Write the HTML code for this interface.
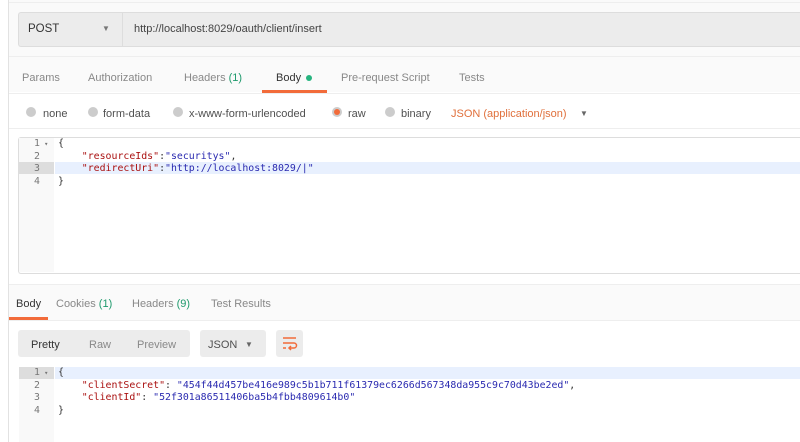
<!DOCTYPE html><html><head><style>
body{margin:0;width:800px;height:442px;overflow:hidden;background:#fff;font-family:"Liberation Sans",sans-serif;font-size:11px;color:#505050;position:relative}
.a{position:absolute}
.mono{font-family:"DejaVu Sans Mono","Liberation Mono",monospace;font-size:9.9px}
.g{color:#888}.gr{color:#1f9a6d}
</style></head><body>
<div class="a" style="left:0;top:0;width:8px;height:442px;border-right:1px solid #e2e2e2"></div>
<div class="a" style="left:9px;top:0;width:791px;height:92px;background:#fafafa"></div>
<div class="a" style="left:9px;top:2px;width:791px;border-top:1px solid #eee"></div>
<div class="a" style="left:18px;top:12px;width:782px;height:33px;background:#ececec;border:1px solid #ddd;border-right:none;border-radius:3px 0 0 3px"></div>
<div class="a" style="left:122px;top:12px;width:1px;height:35px;background:#ddd"></div>
<div class="a" style="left:28px;top:23px;font-size:11.5px;color:#333">POST</div>
<div class="a" style="left:102px;top:24px;font-size:8px;color:#777">▼</div>
<div class="a" style="left:134px;top:23px;font-size:11px;color:#444">http://localhost:8029/oauth/client/insert</div>
<div class="a" style="left:9px;top:56px;width:791px;border-top:1px solid #eee"></div>
<div class="a g" style="left:22px;top:72px">Params</div>
<div class="a g" style="left:88px;top:72px">Authorization</div>
<div class="a g" style="left:184px;top:72px">Headers <span class="gr">(1)</span></div>
<div class="a" style="left:276px;top:72px;color:#333">Body <span style="display:inline-block;width:6px;height:6px;border-radius:50%;background:#26b47f;margin-left:2px"></span></div>
<div class="a g" style="left:341px;top:72px">Pre-request Script</div>
<div class="a g" style="left:459px;top:72px">Tests</div>
<div class="a" style="left:262px;top:90px;width:65px;height:3px;background:#f26b3a"></div>
<div class="a" style="left:9px;top:93px;width:791px;border-top:1px solid #eee"></div>
<div class="a" style="top:107px;left:26px;width:10px;height:10px;border-radius:50%;background:#ccc"></div>
<div class="a" style="left:43px;top:108px">none</div>
<div class="a" style="top:107px;left:88px;width:10px;height:10px;border-radius:50%;background:#ccc"></div>
<div class="a" style="left:103px;top:108px">form-data</div>
<div class="a" style="top:107px;left:173px;width:10px;height:10px;border-radius:50%;background:#ccc"></div>
<div class="a" style="left:189px;top:108px">x-www-form-urlencoded</div>
<div class="a" style="top:107px;left:332px;width:10px;height:10px;border-radius:50%;background:#ccc"><div style="margin:2px;width:6px;height:6px;border-radius:50%;background:#f26b3a"></div></div>
<div class="a" style="left:348px;top:108px">raw</div>
<div class="a" style="top:107px;left:385px;width:10px;height:10px;border-radius:50%;background:#ccc"></div>
<div class="a" style="left:401px;top:108px">binary</div>
<div class="a" style="left:451px;top:108px;color:#e0703c">JSON (application/json)</div>
<div class="a" style="left:580px;top:109px;font-size:8px;color:#666">▼</div>
<div class="a" style="left:9px;top:128px;width:791px;border-top:1px solid #eee"></div>
<div class="a" style="left:18px;top:137px;width:782px;height:135px;border:1px solid #ddd;border-right:none;border-radius:3px 0 0 3px"></div>
<div class="a" style="left:19px;top:138px;width:35px;height:134px;background:#f9f9f9"></div>
<div class="a" style="left:19px;top:162px;width:35px;height:12px;background:#ddd"></div>
<div class="a" style="left:55px;top:162px;width:745px;height:12px;background:#e8f0fe"></div>
<div class="a mono" style="left:34px;top:138px;line-height:12.6px;color:#777">1<span style="font-size:7px"> ▾</span><br>2<br>3<br>4</div>
<div class="a mono" style="left:58px;top:138px;line-height:12.6px;color:#333;white-space:pre">{
    <span style="color:#a11">"resourceIds"</span>:<span style="color:#2a2ab0">"securitys"</span>,
    <span style="color:#a11">"redirectUri"</span>:<span style="color:#2a2ab0">"http://localhost:8029/|"</span>
}</div>
<div class="a" style="left:9px;top:284px;width:791px;height:35px;background:#fafafa;border-top:1px solid #eee;border-bottom:1px solid #eee"></div>
<div class="a" style="left:16px;top:298px;color:#333">Body</div>
<div class="a g" style="left:56px;top:298px">Cookies <span class="gr">(1)</span></div>
<div class="a g" style="left:132px;top:298px">Headers <span class="gr">(9)</span></div>
<div class="a g" style="left:211px;top:298px">Test Results</div>
<div class="a" style="left:9px;top:317px;width:39px;height:3px;background:#f26b3a"></div>
<div class="a" style="left:18px;top:330px;width:172px;height:27px;background:#ececec;border-radius:3px"></div>
<div class="a" style="left:31px;top:339px;color:#333">Pretty</div>
<div class="a g" style="left:89px;top:339px">Raw</div>
<div class="a g" style="left:137px;top:339px">Preview</div>
<div class="a" style="left:200px;top:330px;width:66px;height:27px;background:#ececec;border-radius:3px"></div>
<div class="a" style="left:208px;top:339px">JSON</div>
<div class="a" style="left:245px;top:340px;font-size:8px;color:#666">▼</div>
<div class="a" style="left:276px;top:330px;width:27px;height:27px;background:#ececec;border-radius:3px"></div>
<svg class="a" style="left:281px;top:336px" width="17" height="15" viewBox="0 0 17 15"><path d="M2 2h13M2 7h11a2.5 2.5 0 0 1 0 5H8M10 10l-2 2 2 2M2 12h3" stroke="#f26b3a" stroke-width="1.5" fill="none"/></svg>
<div class="a" style="left:19px;top:367px;width:35px;height:75px;background:#f9f9f9"></div>
<div class="a" style="left:19px;top:367px;width:35px;height:12px;background:#ddd"></div>
<div class="a" style="left:55px;top:367px;width:745px;height:12px;background:#e8f0fe"></div>
<div class="a mono" style="left:34px;top:367px;line-height:12.6px;color:#777">1<span style="font-size:7px"> ▾</span><br>2<br>3<br>4</div>
<div class="a mono" style="left:58px;top:367px;line-height:12.6px;color:#333;white-space:pre">{
    <span style="color:#a11">"clientSecret"</span>: <span style="color:#2a2ab0">"454f44d457be416e989c5b1b711f61379ec6266d567348da955c9c70d43be2ed"</span>,
    <span style="color:#a11">"clientId"</span>: <span style="color:#2a2ab0">"52f301a86511406ba5b4fbb4809614b0"</span>
}</div>
</body></html>
